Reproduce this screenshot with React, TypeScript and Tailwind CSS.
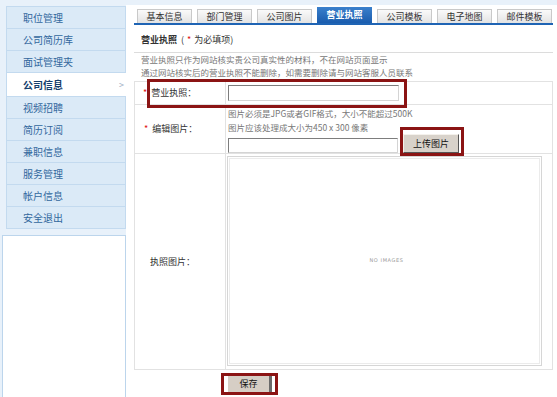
import React from "react";

const menu = ["职位管理", "公司简历库", "面试管理夹", "公司信息", "视频招聘", "简历订阅", "兼职信息", "服务管理", "帐户信息", "安全退出"];
const tabs = ["基本信息", "部门管理", "公司图片", "营业执照", "公司模板", "电子地图", "邮件模板"];

const font = { fontFamily: '"Noto Sans CJK SC", "Liberation Sans", sans-serif' };

function Sidebar() {
  return (
    <div className="flex w-[126px] shrink-0 flex-col">
      <div className="pt-[6px] pl-[6px] pb-[6px]">
        <ul className="border-t border-[#c3daef]">
          {menu.map((item) =>
            item === "公司信息" ? (
              <li
                key={item}
                className="flex h-[24px] items-center justify-between border-b border-l border-[#c3daef] bg-white pl-[16px] pr-[2px] text-[10px] font-bold text-[#153f6c]"
              >
                <span>{item}</span>
                <span className="text-[9px] font-normal text-[#9aabc0]">&gt;</span>
              </li>
            ) : (
              <li
                key={item}
                className="flex h-[22px] items-center border-b border-l border-r border-[#c3daef] bg-[#dbeaf7] pl-[16px] text-[10px] text-[#32679d]"
              >
                {item}
              </li>
            )
          )}
        </ul>
      </div>
      <div className="ml-[2px] flex-1 border-t border-l border-r border-[#bcd5ec] bg-white" />
    </div>
  );
}

function Tabs() {
  return (
    <div>
      <div className="flex items-end gap-[5px] pt-[2px] pl-[3px]">
        {tabs.map((t) =>
          t === "营业执照" ? (
            <div
              key={t}
              className="flex h-[16px] w-[55px] items-center justify-center bg-gradient-to-b from-[#3a80cc] to-[#1a5cad] text-[9px] font-bold text-white"
            >
              {t}
            </div>
          ) : (
            <div
              key={t}
              className="flex h-[14px] w-[55px] items-center justify-center border border-b-0 border-[#c9c9c9] bg-gradient-to-b from-[#fafafa] to-[#e3e3e3] text-[9px] text-[#333]"
            >
              {t}
            </div>
          )
        )}
      </div>
      <div className="h-[2px] bg-[#1f64b4]" />
    </div>
  );
}

function Star() {
  return <span className="mr-[4px] text-[9px] text-[#e01010]">*</span>;
}

export default function App() {
  return (
    <div className="flex h-[397px] w-[557px] overflow-hidden bg-[#e8f1fa]" style={font}>
      <Sidebar />
      <div className="mt-[5px] flex-1 bg-white pl-[8px] pr-[4px]">
        <Tabs />
        <div className="border-b border-[#dcdcdc] pt-[9px] pb-[6px] pl-[7px] text-[9px] leading-[12px] text-[#333]">
          <span className="font-bold">营业执照</span>
          <span className="ml-[4px]">(</span>
          <span className="mx-[3px] text-[#e01010]">*</span>
          <span>为必填项)</span>
        </div>
        <div className="mb-[2px] pl-[7px] text-[8.5px] leading-[13px] text-[#777]">
          <div>营业执照只作为网站核实贵公司真实性的材料，不在网站页面显示</div>
          <div>通过网站核实后的营业执照不能删除，如需要删除请与网站客服人员联系</div>
        </div>

        <div className="relative border border-[#e2e2e2] text-[9px] text-[#333]">
          <div className="grid h-[23px] grid-cols-[91px_1fr] border-b border-[#e2e2e2]">
            <div className="flex items-center border-r border-[#e2e2e2] pl-[8px]">
              <Star />
              营业执照：
            </div>
            <div className="flex items-center pl-[2px]">
              <div className="h-[16px] w-[171px] border border-t-[#7d7d7d] border-l-[#7d7d7d] border-r-[#d4d4d4] border-b-[#d4d4d4] bg-white" />
            </div>
          </div>

          <div className="grid h-[49px] grid-cols-[91px_1fr] border-b border-[#e2e2e2]">
            <div className="flex items-center border-r border-[#e2e2e2] pl-[9px]">
              <Star />
              编辑图片：
            </div>
            <div className="pl-[2px] pt-[1px]">
              <div className="text-[8.5px] leading-[14px] text-[#777]">图片必须是JPG或者GIF格式，大小不能超过500K</div>
              <div className="text-[8.5px] leading-[14px] text-[#777]">图片应该处理成大小为450 x 300 像素</div>
              <div className="flex items-end">
                <div className="h-[15px] w-[170px] border border-t-[#7d7d7d] border-l-[#7d7d7d] border-r-[#d4d4d4] border-b-[#d4d4d4] bg-white" />
                <button className="ml-[5px] flex h-[19px] w-[56px] items-center justify-center border border-t-[#f4f1ec] border-l-[#f4f1ec] border-r-[#555] border-b-[#555] bg-[#d8d2ca] text-[9px] text-[#111]">
                  上传图片
                </button>
              </div>
            </div>
          </div>

          <div className="grid h-[215px] grid-cols-[91px_1fr]">
            <div className="flex items-center border-r border-[#e2e2e2] pl-[15px]">执照图片：</div>
            <div className="pl-px pt-[2px]">
              <div className="h-[210px] w-[315px] border border-[#d6d6d6] p-px">
                <div className="flex h-full w-full items-center justify-center border border-[#ebebeb]">
                  <span className="pl-[4px] text-[5px] tracking-[0.6px] text-[#9a9a9a]" style={{ fontFamily: '"DejaVu Sans", sans-serif' }}>
                    NO IMAGES
                  </span>
                </div>
              </div>
            </div>
          </div>

          <div className="absolute left-[12px] top-[-3px] h-[29px] w-[260px] border-[3px] border-[#8b1414]" />
          <div className="absolute left-[265px] top-[45px] h-[29px] w-[64px] border-[3px] border-[#8b1414]" />
        </div>

        <div className="mt-[3px] ml-[87px] flex h-[22px] w-[57px] border-[3px] border-[#8b1414] pl-[4px] pr-[3px]">
          <button className="flex h-full w-full items-center justify-center border-r-[3px] border-[#6a6a6a] bg-[#d6cec5] text-[9px] text-[#111]">
            保存
          </button>
        </div>
      </div>
    </div>
  );
}
